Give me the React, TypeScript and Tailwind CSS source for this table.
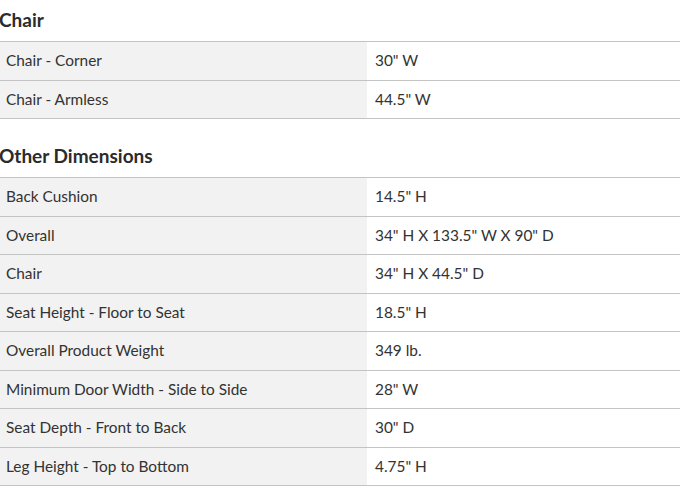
import * as React from "react";

type Row = [string, string];

const chair: Row[] = [
  ["Chair - Corner", "30\" W"],
  ["Chair - Armless", "44.5\" W"],
];

const other: Row[] = [
  ["Back Cushion", "14.5\" H"],
  ["Overall", "34\" H X 133.5\" W X 90\" D"],
  ["Chair", "34\" H X 44.5\" D"],
  ["Seat Height - Floor to Seat", "18.5\" H"],
  ["Overall Product Weight", "349 lb."],
  ["Minimum Door Width - Side to Side", "28\" W"],
  ["Seat Depth - Front to Back", "30\" D"],
  ["Leg Height - Top to Bottom", "4.75\" H"],
];

function Section({ title, rows, first }: { title: string; rows: Row[]; first?: boolean }) {
  return (
    <section className={first ? "" : "mt-[17px]"}>
      <h2 className="h-[41px] flex items-center text-[19px] font-bold text-[#2b2b2b] -ml-[1px]">
        {title}
      </h2>
      <div className="border-b border-[#c4c4c4]">
        {rows.map(([label, value]) => (
          <div key={label} className="flex h-[38.5px] border-t border-[#c4c4c4] text-[15.4px] text-[#333]">
            <div className="w-[367px] shrink-0 bg-[#f2f2f2] pl-[6px] flex items-center">{label}</div>
            <div className="flex-1 pl-[8px] flex items-center">{value}</div>
          </div>
        ))}
      </div>
    </section>
  );
}

export default function App() {
  return (
    <div className="w-[680px] h-[490px] overflow-hidden bg-white" style={{ fontFamily: "Lato, 'Open Sans', sans-serif" }}>
      <Section title="Chair" rows={chair} first />
      <Section title="Other Dimensions" rows={other} />
    </div>
  );
}
